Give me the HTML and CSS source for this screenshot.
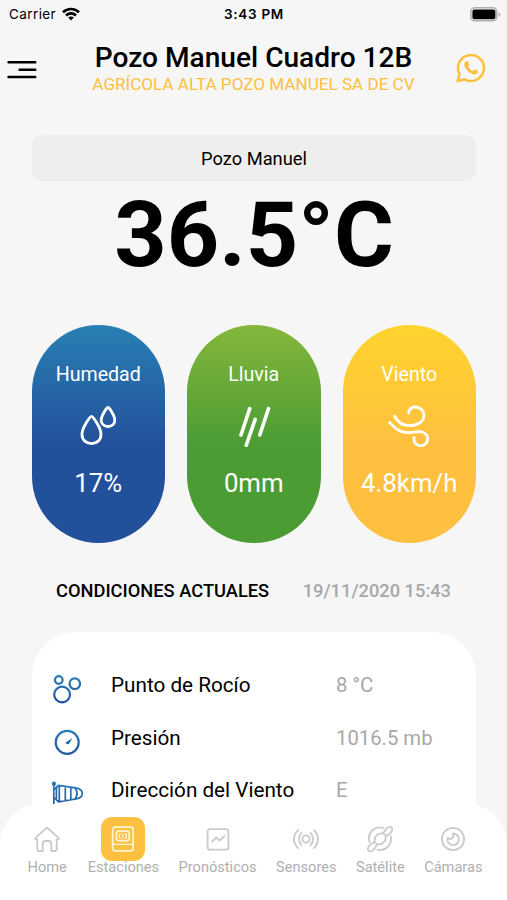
FILE: index.html
```html
<!DOCTYPE html>
<html lang="es">
<head>
    <meta charset="UTF-8">
    <meta name="viewport" content="width=device-width, initial-scale=1.0">
    <title>Estaciones</title>
    <link rel="stylesheet" href="styles.css">
</head>
<body>
    <div class="status-bar">
        <div class="carrier">
            <span>Carrier</span>
            <svg width="18" height="14" viewBox="0 0 18 14" fill="none" stroke="#000" stroke-width="2.6">
                <path d="M1 5.2C5.4 .9 12.6 .9 17 5.2"/>
                <path d="M4 8.5C6.8 5.7 11.2 5.7 14 8.5"/>
                <path d="M9 13.4L6.2 10.6C7.8 9 10.2 9 11.8 10.6Z" fill="#000" stroke="none"/>
            </svg>
        </div>
        <div class="time">3:43 PM</div>
        <div class="battery">
            <svg width="31" height="15" viewBox="0 0 31 15">
                <rect x=".8" y=".8" width="26" height="13" rx="4" fill="#f6f6f6" stroke="#b0b0b0" stroke-width="1.6"/>
                <rect x="2.4" y="2.6" width="23" height="9.6" rx="2" fill="#000"/>
                <path d="M28.6 5v5c2.2-1 2.2-4 0-5Z" fill="#b0b0b0"/>
            </svg>
        </div>
    </div>

    <div class="header">
        <svg class="menu" width="30" height="20" viewBox="0 0 30 20" stroke="#000" stroke-width="2.4" stroke-linecap="round">
            <path d="M1.5 2.2H28.3M12.5 9.7H28.3M1.5 17H28.3"/>
        </svg>
        <div class="titles">
            <h1>Pozo Manuel Cuadro 12B</h1>
            <p>AGRÍCOLA ALTA POZO MANUEL SA DE CV</p>
        </div>
        <svg class="whatsapp" width="30" height="30" viewBox="0 0 30 30">
            <path d="M1.6 28.2L3.5 21.2A13 13 0 1 1 8.5 26.3Z" fill="none" stroke="#fdc040" stroke-width="2.5" stroke-linejoin="round"/>
            <path d="M10.2 8.3C11.3 7.8 12 8.3 12.3 9.1L13.2 11.3C13.5 12.2 12.1 13 12.1 13.5C12.8 15.3 14.8 17.2 16.7 17.9C17.4 17.8 18 16.2 18.9 16.5L21.4 17.7C22.5 18.3 21.9 20 20.8 20.8C18.6 22.2 15.7 21 13.6 19.5C11 17.7 8.3 14.5 8.3 11.6C8.3 10.2 9.1 8.9 10.2 8.3Z" fill="#fdc040"/>
        </svg>
    </div>

    <div class="content">
        <div class="station">Pozo Manuel</div>
        <div class="temperature">36.5°C</div>

        <div class="pills">
            <div class="pill humidity">
                <span class="pill-label">Humedad</span>
                <svg width="36" height="42" viewBox="0 0 36 42">
                    <path d="M11.5 11.4C10.2 11.4 2 22.5 2 29.6C2 35 6.2 38.6 11.5 38.6S21 35 21 29.6C21 22.5 12.8 11.4 11.5 11.4Z"/>
                    <path d="M28 2.5C27 2.5 21.2 10 21.2 15.1C21.2 19 24.2 21.5 28 21.5S34.8 19 34.8 15.1C34.8 10 29 2.5 28 2.5Z"/>
                </svg>
                <span class="pill-value">17%</span>
            </div>
            <div class="pill rain">
                <span class="pill-label">Lluvia</span>
                <svg width="36" height="42" viewBox="0 0 36 42">
                    <path d="M13.7 3.6L5 30M19.2 14.4L10.2 40.4M32.5 3.6L23.8 30"/>
                </svg>
                <span class="pill-value">0mm</span>
            </div>
            <div class="pill wind">
                <span class="pill-label">Viento</span>
                <svg width="42" height="42" viewBox="0 0 42 42">
                    <path d="M6.5 11C9 16 14 20.7 21.5 20.7C29 20.7 36 17 36 10.6C36 5 31.5 2 27.5 2C23 2 20.5 5 20.7 8"/>
                    <path d="M1.7 17.5C7 23 11 27.5 19.5 27.7C25 27.8 28 26.2 33 26.8C37.5 27.4 39.9 30.5 39.7 34.2C39.4 38.5 36 41 32 40.7C28 40.4 25 36.8 26.2 32.5"/>
                </svg>
                <span class="pill-value">4.8km/h</span>
            </div>
        </div>

        <div class="section-title">
            <h2>CONDICIONES ACTUALES</h2>
            <span class="date">19/11/2020 15:43</span>
        </div>

        <div class="card">
            <svg width="0" height="0" class="defs">
                <linearGradient id="blue" x1="0" y1="0" x2="0" y2="32" gradientUnits="userSpaceOnUse">
                    <stop offset="0" stop-color="#2880ba"/>
                    <stop offset="1" stop-color="#23509b"/>
                </linearGradient>
            </svg>
            <div class="row">
                <svg width="32" height="32" viewBox="0 0 32 32">
                    <circle cx="6.8" cy="6" r="3.8"/>
                    <circle cx="22.8" cy="9.7" r="5.3"/>
                    <circle cx="10.1" cy="20.5" r="7.9"/>
                </svg>
                <span class="name">Punto de Rocío</span>
                <span class="value">8 °C</span>
            </div>
            <div class="row">
                <svg width="32" height="32" viewBox="0 0 32 32">
                    <circle cx="15.2" cy="15.4" r="11.5"/>
                    <path d="M20.3 11L17.7 15.9C16.5 17.8 13.8 17.5 13.7 15.5Z" fill="url(#blue)" stroke="none"/>
                </svg>
                <span class="name">Presión</span>
                <span class="value">1016.5 mb</span>
            </div>
            <div class="row">
                <svg class="sock" width="32" height="32" viewBox="0 0 32 32">
                    <circle cx="1.8" cy="3.8" r="1.4" fill="url(#blue)"/>
                    <path d="M1.8 4V24.5M2 9.5L6.5 5.5L24 7.8C28.3 8.6 30.3 11 30.3 13.5C30.3 16.3 28.3 18.3 24 19L6.5 21.8L2 17.5M7.3 6V21.5M4.4 8V19M13.3 6.8V20.4M18.8 7.5V19.5M23 8C25.6 11.5 25.6 15.5 23 19"/>
                </svg>
                <span class="name">Dirección del Viento</span>
                <span class="value">E</span>
            </div>
        </div>
    </div>

    <div class="tab-bar">
        <div class="tab">
            <div class="tab-icon">
                <svg width="28" height="28" viewBox="0 0 28 28">
                    <path d="M2.2 13.2L14 2.5L25.8 13.2C26.2 14.5 24.8 14.9 23.7 14.3V24.5Q23.7 26 22.2 26H18.3V18.7C18.3 16.8 17.5 16 15.7 16H12.3C10.5 16 9.7 16.8 9.7 18.7V26H5.8Q4.3 26 4.3 24.5V14.3C3.2 14.9 1.8 14.5 2.2 13.2Z"/>
                </svg>
            </div>
            <span>Home</span>
        </div>
        <div class="tab active">
            <div class="tab-icon">
                <svg width="28" height="28" viewBox="0 0 28 28">
                    <rect x="3.7" y="2.2" width="20.4" height="23.6" rx="2.5"/>
                    <rect x="7.4" y="6.2" width="12.8" height="9.4" rx="2"/>
                    <path d="M12 8.9H10.4V13H12M15.8 8.9H17.4V13H15.8M13.9 9V12.9" stroke-width="1.2"/>
                    <path d="M4 19.3H24" stroke-width="1.3"/>
                </svg>
            </div>
            <span>Estaciones</span>
        </div>
        <div class="tab">
            <div class="tab-icon">
                <svg width="28" height="28" viewBox="0 0 28 28">
                    <rect x="3.6" y="4.2" width="20.8" height="20.4" rx="2"/>
                    <path d="M8 16.7L12.2 12.5L15.5 15.5L20.5 11.2"/>
                </svg>
            </div>
            <span>Pronósticos</span>
        </div>
        <div class="tab">
            <div class="tab-icon">
                <svg width="28" height="28" viewBox="0 0 28 28">
                    <circle cx="14" cy="14" r="3.6"/>
                    <path d="M9.5 7.7Q4.5 14 9.5 20.3M18.5 7.7Q23.5 14 18.5 20.3M6.2 5.2C.6 10.2 .6 17.8 6.2 23.2M21.8 5.2C27.4 10.2 27.4 17.8 21.8 23.2"/>
                </svg>
            </div>
            <span>Sensores</span>
        </div>
        <div class="tab">
            <div class="tab-icon">
                <svg width="28" height="28" viewBox="0 0 28 28">
                    <path d="M17.5 3A11 11 0 0 0 3.6 17.2M24.6 11A11 11 0 0 1 11.5 24.7"/>
                    <path d="M12 9.2L17 8.2L20 11.2L19.2 15.6L15.8 18.8L11.3 19.7L8.4 16.8L9.2 12.2Z"/>
                    <path d="M17.4 7.8L20.3 3.8C21.3 2.2 24.8 1.2 25.6 2.2C26.6 3.4 26.2 6.6 24.6 7.7L20.5 10.7M8 17.3L3.7 20.2C2 21.4 1.3 24.8 2.4 25.8C3.5 26.8 6.7 26.2 7.8 24.4L10.7 20.2"/>
                </svg>
            </div>
            <span>Satélite</span>
        </div>
        <div class="tab">
            <div class="tab-icon">
                <svg width="28" height="28" viewBox="0 0 28 28">
                    <circle cx="14" cy="14" r="11.1"/>
                    <path d="M13.8 8.5A5.8 5.8 0 1 1 8.5 12.8C9.8 14.2 12 14.3 13.3 13C14.6 11.8 14.7 10 13.8 8.5Z"/>
                </svg>
            </div>
            <span>Cámaras</span>
        </div>
    </div>
</body>
</html>
```

FILE: styles.css
```css
:root {
    --background: #f6f6f6;
    --yellow: #fdc040;
    --gray: #a8a8a8;
    --text: #000000;
}

* {
    margin: 0;
    padding: 0;
    box-sizing: border-box;
}

body {
    font-family: Roboto, sans-serif;
    background: var(--background);
    color: var(--text);
    height: 900px;
    overflow: hidden;
    display: flex;
    flex-direction: column;
}

svg {
    display: block;
    flex-shrink: 0;
}

.status-bar {
    height: 28px;
    padding: 0 6px 0 9px;
    display: grid;
    grid-template-columns: 1fr auto 1fr;
    align-items: center;
    font-family: Inter, sans-serif;
    font-size: 13.5px;
    letter-spacing: 0.4px;
}

.carrier {
    display: flex;
    align-items: center;
    gap: 6px;
}

.time {
    font-weight: 600;
    letter-spacing: 0.7px;
    margin-right: 2px;
}

.battery {
    display: flex;
    justify-content: flex-end;
}

.header {
    height: 107px;
    padding: 14px 21px 0 7px;
    display: flex;
    align-items: flex-start;
    justify-content: space-between;
}

.menu {
    margin-top: 18px;
}

.whatsapp {
    margin-top: 11px;
}

.titles {
    text-align: center;
    margin-left: 14px;
}

h1 {
    font-size: 28.1px;
    line-height: 32px;
    font-weight: 500;
}

.titles p {
    font-size: 17.1px;
    line-height: 20px;
    color: var(--yellow);
}

.content {
    flex: 1;
    min-height: 0;
    padding: 0 31px 0 32px;
}

.station {
    height: 46px;
    border-radius: 10px;
    background: #eeeeee;
    text-align: center;
    font-size: 18.3px;
    line-height: 47px;
}

.temperature {
    height: 144px;
    text-align: center;
    font-size: 91.5px;
    line-height: 108px;
    font-weight: 700;
}

.pills {
    display: flex;
    justify-content: space-between;
    margin-left: -0.5px;
}

.pill {
    width: 133.5px;
    height: 218px;
    padding-top: 37px;
    border-radius: 67px;
    display: flex;
    flex-direction: column;
    align-items: center;
    color: white;
}

.pill svg {
    margin: 18px 0 21px;
    fill: none;
    stroke: white;
    stroke-width: 2.8;
    stroke-linecap: round;
    stroke-linejoin: round;
}

.pill-label {
    font-size: 19.6px;
    line-height: 25px;
}

.pill-value {
    font-size: 25.8px;
    line-height: 30px;
}

.humidity {
    background: linear-gradient(#2880b4, #23509b 55%);
}

.rain {
    background: linear-gradient(#84b73c, #4c9c34 55%);
}

.rain svg {
    stroke-width: 3.6;
}

.wind {
    background: linear-gradient(#ffd42d, #ffc040 55%);
}

.section-title {
    height: 89px;
    padding: 35px 25px 0 24px;
    display: flex;
    justify-content: space-between;
    line-height: 25px;
    font-size: 18.3px;
    font-weight: 500;
}

h2 {
    font-size: 18.3px;
    font-weight: 500;
}

.date {
    color: var(--gray);
}

.card {
    height: 220px;
    padding: 27px 20px 0;
    border-radius: 44px 44px 0 0;
    background: white;
}

.defs {
    position: absolute;
}

.row {
    display: grid;
    grid-template-columns: 59px 225px 1fr;
    height: 52.5px;
    font-size: 20.7px;
    line-height: 52px;
}

.row svg {
    margin-top: 15px;
    fill: none;
    stroke: url(#blue);
    stroke-width: 2.2;
}

.row .sock {
    stroke-width: 1.7;
    margin-top: 16px;
}

.value {
    font-size: 20.3px;
    color: var(--gray);
}

.tab-bar {
    position: fixed;
    left: 0;
    right: 0;
    bottom: 0;
    height: 96px;
    padding: 13px 24.5px 0 27.5px;
    border-radius: 40px 40px 0 0;
    background: white;
    display: flex;
    justify-content: space-between;
}

.tab {
    display: flex;
    flex-direction: column;
    align-items: center;
    font-size: 14.6px;
    line-height: 13px;
    color: #b0b0b0;
}

.tab.active {
    margin-left: 1.5px;
}

.tab-icon {
    width: 44px;
    height: 44px;
    margin: 0 -10px;
    border-radius: 11px;
    display: flex;
    align-items: center;
    justify-content: center;
}

.tab svg {
    fill: none;
    stroke: #cacaca;
    stroke-width: 1.8;
    stroke-linecap: round;
    stroke-linejoin: round;
}

.active .tab-icon {
    background: var(--yellow);
}

.tab.active svg {
    stroke: #fff3d2;
}
```
